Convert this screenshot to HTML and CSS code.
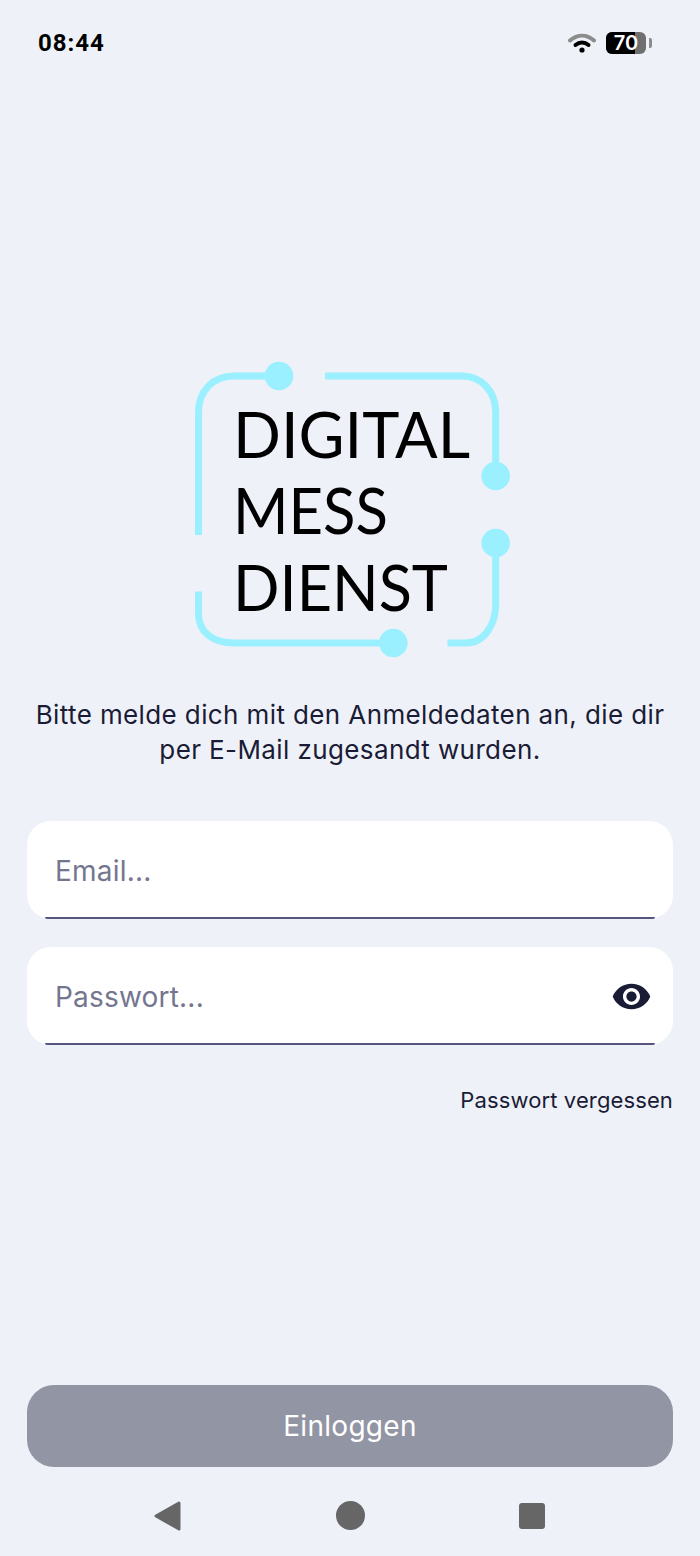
FILE: index.html
```html
<!DOCTYPE html>
<html lang="de">
<head>
    <meta charset="UTF-8">
    <meta name="viewport" content="width=device-width, initial-scale=1.0">
    <title>Digital Mess Dienst Login</title>
    <link rel="stylesheet" href="styles.css">
</head>
<body>
    <div class="page">

        <!-- Status bar -->
        <div class="status-bar">
            <span class="time">08:44</span>
            <div class="status-icons">
                <svg class="wifi" viewBox="0 0 28 20" width="28" height="20">
                    <path d="M2 7.500C9.500 1 18.500 1 26 7.500" class="wifi-outer"/>
                    <path d="M7.500 12C11.500 8.800 16.500 8.800 20.500 12" class="wifi-inner"/>
                    <circle cx="14" cy="17" r="2.600" fill="#000"/>
                </svg>
                <div class="battery">
                    <div class="battery-body">
                        <div class="battery-level"></div>
                        <span class="battery-text">70</span>
                    </div>
                    <div class="battery-nub"></div>
                </div>
            </div>
        </div>

        <!-- Logo -->
        <svg class="logo" viewBox="180 350 340 320" width="340" height="320">
            <g class="logo-lines">
                <path d="M198.500 535V412C198.500 391 213 376 234 376H279"/>
                <path d="M325 376H462C481 376 495.700 391 495.700 412V476"/>
                <path d="M495.700 543V604C495.700 625 484 643 466 643H447.500"/>
                <path d="M198.500 591.500V614C198.500 632 213 643 234 643H393"/>
            </g>
            <g class="logo-dots">
                <circle cx="279" cy="376" r="14.300"/>
                <circle cx="495.700" cy="476" r="14.300"/>
                <circle cx="495.700" cy="543" r="14.300"/>
                <circle cx="393.300" cy="643" r="14.300"/>
            </g>
            <text class="logo-text" x="233" y="458">DIGITAL</text>
            <text class="logo-text" x="233" y="533.500" textLength="155" lengthAdjust="spacingAndGlyphs">MESS</text>
            <text class="logo-text" x="233" y="610.500" textLength="215" lengthAdjust="spacingAndGlyphs">DIENST</text>
        </svg>

        <p class="intro">Bitte melde dich mit den Anmeldedaten an, die dir per E-Mail zugesandt wurden.</p>

        <!-- Login form -->
        <div class="form">
            <div class="field">
                <span class="placeholder">Email...</span>
            </div>
            <div class="field">
                <span class="placeholder">Passwort...</span>
                <svg class="eye" viewBox="0 0 24 24" width="41" height="41">
                    <path d="M12 4.500C7 4.500 2.730 7.610 1 12c1.730 4.390 6 7.500 11 7.500s9.270-3.110 11-7.500c-1.730-4.390-6-7.500-11-7.500zM12 17c-2.760 0-5-2.240-5-5s2.240-5 5-5 5 2.240 5 5-2.240 5-5 5zm0-8c-1.660 0-3 1.340-3 3s1.340 3 3 3 3-1.340 3-3-1.340-3-3-3z"/>
                </svg>
            </div>
            <a class="forgot">Passwort vergessen</a>
        </div>

        <button class="login-btn">Einloggen</button>

        <!-- Android navigation bar -->
        <div class="nav-bar">
            <svg viewBox="0 0 27 30" width="27" height="30">
                <path d="M25 2L2 15L25 28Z" class="nav-back"/>
            </svg>
            <div class="nav-home"></div>
            <div class="nav-recent"></div>
        </div>

    </div>
</body>
</html>
```

FILE: styles.css
```css
* { margin: 0; padding: 0; box-sizing: border-box; font-family: 'Inter', 'Liberation Sans', sans-serif; }
body {
    background: #eef1f8;
    color: #1a1c36;
}
.page {
    height: 1556px;
    width: 700px;
    display: flex;
    flex-direction: column;
    align-items: center;
}

/* Status bar */
.status-bar {
    width: 100%;
    height: 86px;
    padding: 0 48px 0 38px;
    display: flex;
    justify-content: space-between;
    align-items: center;
}
.time {
    font-family: 'Roboto', sans-serif;
    font-size: 24px;
    font-weight: 700;
    letter-spacing: 1px;
    color: #000;
}
.status-icons {
    display: flex;
    align-items: center;
    gap: 10px;
}
.wifi path {
    fill: none;
    stroke-width: 4;
    stroke-linecap: round;
}
.wifi-outer { stroke: #8c8c8c; }
.wifi-inner { stroke: #000; }
.battery {
    display: flex;
    align-items: center;
    gap: 3px;
}
.battery-body {
    position: relative;
    width: 40px;
    height: 22px;
    background: #6f6f6f;
    border-radius: 6px;
    overflow: hidden;
}
.battery-level {
    width: 29px;
    height: 100%;
    background: #000;
}
.battery-text {
    position: absolute;
    top: 0;
    left: 0;
    width: 40px;
    text-align: center;
    line-height: 22px;
    font-size: 20px;
    font-weight: 600;
    color: #fff;
}
.battery-nub {
    width: 3px;
    height: 10px;
    background: #8c8c8c;
    border-radius: 0 2px 2px 0;
}

/* Logo */
.logo {
    margin-top: 264px;
    display: block;
}
.logo-lines path {
    fill: none;
    stroke: #9af0ff;
    stroke-width: 7;
}
.logo-dots circle { fill: #9af0ff; }
.logo-text {
    font-family: 'Lato', sans-serif;
    font-size: 63px;
    fill: #000;
}

.intro {
    width: 640px;
    margin-top: 27px;
    text-align: center;
    font-size: 26px;
    letter-spacing: 0.39px;
    line-height: 35px;
}

/* Form */
.form {
    width: 646px;
    margin-top: 54px;
    display: flex;
    flex-direction: column;
    gap: 28px;
}
.field {
    position: relative;
    height: 98px;
    padding: 0 21px 0 28px;
    background: #fff;
    border-radius: 24px;
    display: flex;
    justify-content: space-between;
    align-items: center;
}
.field::after {
    content: "";
    position: absolute;
    left: 18px;
    right: 18px;
    bottom: 0;
    height: 2px;
    background: #55557e;
    border-radius: 0 0 4px 4px;
}
.placeholder {
    padding-top: 2px;
    font-size: 28px;
    letter-spacing: 0.2px;
    color: #74768f;
}
.eye { fill: #1a1c36; }
.forgot {
    align-self: flex-end;
    margin-top: 13px;
    font-size: 22px;
    letter-spacing: 0.12px;
    line-height: 28px;
}

/* Button */
.login-btn {
    width: 646px;
    height: 82px;
    margin-top: auto;
    background: #9295a4;
    color: #fff;
    border: none;
    border-radius: 27px;
    font-size: 28px;
    letter-spacing: 0.3px;
}

/* Navigation bar */
.nav-bar {
    width: 100%;
    height: 89px;
    padding: 8px 155px 0 154px;
    display: flex;
    justify-content: space-between;
    align-items: center;
}
.nav-back {
    fill: #666;
    stroke: #666;
    stroke-width: 3;
    stroke-linejoin: round;
}
.nav-home {
    width: 29px;
    height: 29px;
    background: #666;
    border-radius: 50%;
}
.nav-recent {
    width: 26px;
    height: 26px;
    background: #666;
    border-radius: 3px;
}
```
